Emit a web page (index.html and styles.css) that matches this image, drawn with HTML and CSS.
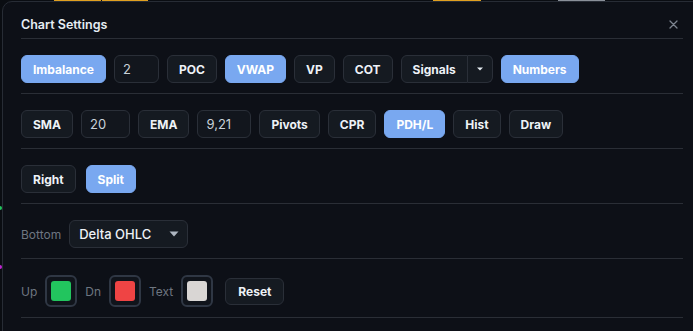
FILE: index.html
```html
<!DOCTYPE html>
<html lang="en">
<head>
	<meta charset="utf-8">
	<meta name="viewport" content="width=device-width, initial-scale=1">
	<title>Chart Settings</title>
	<link rel="stylesheet" href="styles.css">
</head>
<body>
	<!-- chart behind the dialog, only a few bits show -->
	<div class="chart-bg">
		<span class="bar bar-a"></span>
		<span class="bar bar-b"></span>
		<span class="bar bar-c"></span>
		<span class="price"></span>
		<span class="dot dot-green"></span>
		<span class="dot dot-pink"></span>
	</div>

	<div class="modal">
		<div class="modal-head">
			<h2 class="modal-title">Chart Settings</h2>
			<button class="close-btn" aria-label="Close">
				<svg width="9" height="9" viewBox="0 0 9 9"><path d="M1 1L8 8M8 1L1 8" stroke="#7d8590" stroke-width="1.3" stroke-linecap="round"/></svg>
			</button>
		</div>

		<div class="section">
			<button class="btn active">Imbalance</button>
			<input class="field w45" value="2">
			<button class="btn">POC</button>
			<button class="btn active">VWAP</button>
			<button class="btn">VP</button>
			<button class="btn">COT</button>
			<div class="split-btn">
				<button class="btn btn-main">Signals</button>
				<button class="btn btn-caret">
					<svg width="6" height="4" viewBox="0 0 6 4"><path d="M0 0.5H6L3 3.5Z" fill="#e6edf3"/></svg>
				</button>
			</div>
			<button class="btn active">Numbers</button>
		</div>

		<div class="section">
			<button class="btn">SMA</button>
			<input class="field w49" value="20">
			<button class="btn">EMA</button>
			<input class="field w54" value="9,21">
			<button class="btn">Pivots</button>
			<button class="btn">CPR</button>
			<button class="btn active">PDH/L</button>
			<button class="btn">Hist</button>
			<button class="btn">Draw</button>
		</div>

		<div class="section wide-gap">
			<button class="btn">Right</button>
			<button class="btn active">Split</button>
		</div>

		<div class="section">
			<span class="label">Bottom</span>
			<div class="select">
				<span>Delta OHLC</span>
				<svg width="10" height="6" viewBox="0 0 10 6"><path d="M0.5 0.5H9.5L5 5.5Z" fill="#aeb6c1"/></svg>
			</div>
		</div>

		<div class="section">
			<span class="label">Up</span>
			<span class="swatch"><span class="swatch-fill green"></span></span>
			<span class="label">Dn</span>
			<span class="swatch"><span class="swatch-fill red"></span></span>
			<span class="label">Text</span>
			<span class="swatch"><span class="swatch-fill light"></span></span>
			<button class="btn reset">Reset</button>
		</div>
	</div>
</body>
</html>
```

FILE: styles.css
```css
:root {
	--page-bg:      #0a0d12;
	--modal-bg:     #0d1017;
	--modal-border: #272c35;
	--divider:      #2a2e36;
	--btn-bg:       #151a21;
	--btn-border:   #2a2f38;
	--active-bg:    #79a8f0;
	--text:         #eef2f7;
	--field-text:   #c9d1d9;
	--muted:        #6e7681;
}
* {
	margin: 0;
	padding: 0;
	box-sizing: border-box;
}
body {
	background: var(--page-bg);
	font-family: Inter, "Noto Sans", sans-serif;
	color: var(--text);
	overflow: hidden;
	height: 331px;
	position: relative;
}
.chart-bg .bar {
	position: absolute;
	top: 0;
	height: 2px;
	background: #e0a020;
}
.bar-a { left: 54px; width: 47px; }
.bar-b { left: 102px; width: 46px; }
.bar-c { left: 433px; width: 48px; }
.chart-bg .price {
	position: absolute;
	top: 0;
	left: 558px;
	width: 47px;
	height: 1px;
	background: #8a9099;
}
.chart-bg .dot {
	position: absolute;
	left: 0;
	width: 2px;
	height: 4px;
	border-radius: 0 2px 2px 0;
}
.dot-green { top: 206px; background: #22c55e; }
.dot-pink { top: 265px; height: 2px; background: #c026d3; }

.modal {
	position: relative;
	margin: 1px 0 0 2px;
	width: 700px;
	height: 340px;
	padding: 0 18px;
	background: var(--modal-bg);
	border: 1px solid var(--modal-border);
	border-radius: 10px;
}
.modal-head {
	height: 37px;
	padding-top: 8px;
	display: flex;
	align-items: center;
	justify-content: space-between;
	border-bottom: 1px solid var(--divider);
}
.modal-title {
	font-size: 12.5px;
	font-weight: 600;
	color: #e6edf3;
}
.close-btn {
	background: none;
	border: 0;
	margin-right: 5px;
	display: flex;
}
.section {
	display: flex;
	align-items: center;
	gap: 8px;
	padding: 16px 0 10px;
	border-bottom: 1px solid var(--divider);
}
.section.wide-gap {
	gap: 10px;
}
.btn {
	height: 28px;
	padding: 0 11px;
	font-family: inherit;
	font-size: 12px;
	font-weight: 700;
	color: var(--text);
	background: var(--btn-bg);
	border: 1px solid var(--btn-border);
	border-radius: 6px;
	display: flex;
	align-items: center;
}
.btn.active {
	background: var(--active-bg);
	border-color: var(--active-bg);
	color: #fff;
}
.field {
	height: 28px;
	padding: 0 8px;
	font-family: inherit;
	font-size: 13px;
	color: var(--field-text);
	background: #12161d;
	border: 1px solid var(--btn-border);
	border-radius: 6px;
	outline: none;
}
.w45 { width: 45px; }
.w49 { width: 49px; }
.w54 { width: 54px; }
.split-btn {
	display: flex;
}
.split-btn .btn-main {
	border-radius: 6px 0 0 6px;
}
.split-btn .btn-caret {
	width: 25px;
	padding: 0;
	justify-content: center;
	border-left: 0;
	border-radius: 0 6px 6px 0;
}
.label {
	font-size: 12px;
	color: var(--muted);
}
.select {
	width: 119px;
	height: 28px;
	padding: 0 8px 0 9px;
	display: flex;
	align-items: center;
	justify-content: space-between;
	font-size: 13px;
	font-weight: 500;
	color: var(--text);
	background: var(--btn-bg);
	border: 1px solid var(--btn-border);
	border-radius: 6px;
}
.swatch {
	width: 32px;
	height: 32px;
	padding: 4px;
	border: 2px solid #2f3744;
	border-radius: 6px;
	background: #10141b;
}
.swatch-fill {
	display: block;
	width: 20px;
	height: 20px;
	border-radius: 3px;
}
.green { background: #22c55e; }
.red { background: #ef4444; }
.light { background: #d9d6d4; }
.btn.reset {
	height: 27px;
	margin-left: 4px;
	padding: 0 12px;
}
```
